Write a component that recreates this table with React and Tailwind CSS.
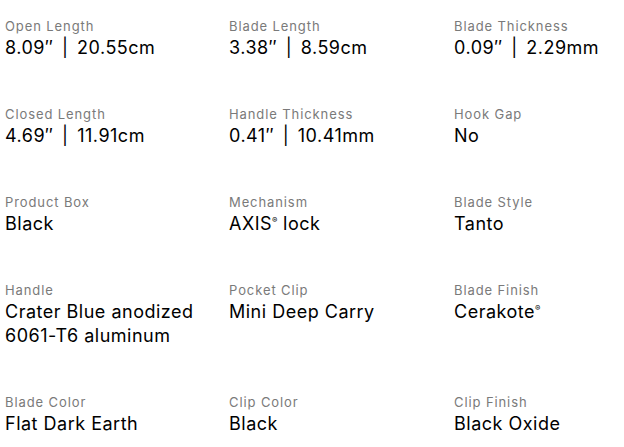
import React from 'react';

const specs = [
  { label: 'Open Length', value: '8.09″ | 20.55cm' },
  { label: 'Blade Length', value: '3.38″ | 8.59cm' },
  { label: 'Blade Thickness', value: '0.09″ | 2.29mm' },
  { label: 'Closed Length', value: '4.69″ | 11.91cm' },
  { label: 'Handle Thickness', value: '0.41″ | 10.41mm' },
  { label: 'Hook Gap', value: 'No' },
  { label: 'Product Box', value: 'Black' },
  { label: 'Mechanism', value: 'AXIS', reg: true, after: ' lock' },
  { label: 'Blade Style', value: 'Tanto' },
  { label: 'Handle', value: 'Crater Blue anodized 6061-T6 aluminum' },
  { label: 'Pocket Clip', value: 'Mini Deep Carry' },
  { label: 'Blade Finish', value: 'Cerakote', reg: true },
  { label: 'Blade Color', value: 'Flat Dark Earth' },
  { label: 'Clip Color', value: 'Black' },
  { label: 'Clip Finish', value: 'Black Oxide' },
];

// imperial | metric values get a little more room round the bar
const renderValue = (value) => {
  const parts = value.split(' | ');
  if (parts.length < 2) return value;
  return (
    <>
      {parts[0]}{' '}<span className="mx-[3px]">|</span>{' '}{parts[1]}
    </>
  );
};

const App = () => {
  return (
    <div className="w-[624px] h-[447px] bg-white overflow-hidden font-['Inter',sans-serif]">
      <div className="grid grid-cols-[224px_225px_175px] gap-y-[46px] pl-[5px] pt-[18px]">
        {specs.map((spec) => (
          <div key={spec.label} className="flex flex-col gap-[2px] pr-[4px]">
            <p className="text-[13px] leading-[16px] tracking-[0.9px] text-[#7a7a7a]">{spec.label}</p>
            <p className="text-[18px] leading-[24px] tracking-[0.5px] text-black">
              {renderValue(spec.value)}
              {spec.reg && <sup className="text-[8px] top-[-0.9em] tracking-normal">®</sup>}
              {spec.after}
            </p>
          </div>
        ))}
      </div>
    </div>
  );
};

export default App;
